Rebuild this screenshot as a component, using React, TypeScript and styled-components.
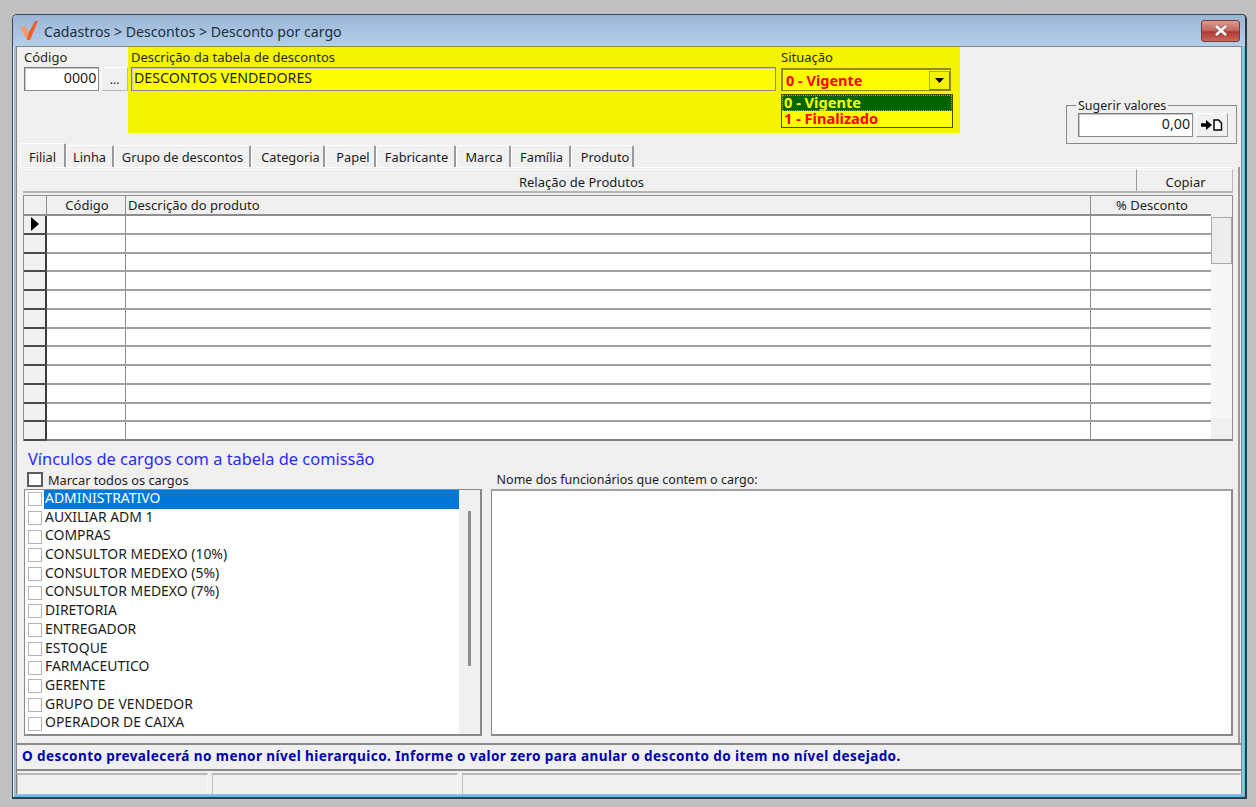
import React from "react";
import styled, { createGlobalStyle } from "styled-components";

const Global = createGlobalStyle`
  html, body { margin: 0; padding: 0; background: #c0c0c0; }
  body { width: 1256px; height: 807px; overflow: hidden; font-family: "Noto Sans", "Open Sans", sans-serif; font-size: 13px; color: #1c1c1c; }
  * { box-sizing: border-box; }
`;

const Page = styled.div`
  padding: 14px 9px 8px 12px;
  height: 807px;
`;
const Window = styled.div`
  width: 1235px;
  height: 785px;
  border: 1px solid #3c4650;
  border-bottom: 2px solid #2e4450;
  border-right: 2px solid #2e3a44;
  border-radius: 5px 5px 0 0;
  background: #9fc0dd;
  box-shadow: inset 1px 0 0 #e6f0f8, inset -1px 0 0 #5cc0ec, inset 0 -2px 0 #5cc0ec;
  padding: 0 3px 3px 3px;
  display: flex;
  flex-direction: column;
`;
const TitleBar = styled.div`
  height: 31px;
  margin: 0 -3px;
  padding: 0 5px 0 6px;
  display: flex;
  align-items: center;
  gap: 5px;
  border-radius: 4px 4px 0 0;
  background: linear-gradient(#9ab6d6, #b4cfe8);
  font-size: 14.15px;
  color: #20303e;
`;
const TitleText = styled.span`
  flex: 1;
  margin-top: 1px;
`;
const CloseBtn = styled.div`
  width: 39px;
  height: 22px;
  border: 1px solid #7a3b3b;
  border-radius: 3px;
  background: linear-gradient(#d99a92 0%, #c8695f 45%, #ad3a30 55%, #c8685c 100%);
  display: flex;
  align-items: center;
  justify-content: center;
`;
const Body = styled.div`
  flex: 1;
  min-height: 0;
  background: #f0f0f0;
  border: 1px solid #858585;
  border-bottom: 0;
  display: flex;
  flex-direction: column;
`;
const TopRow = styled.div`
  display: flex;
  height: 86px;
`;
const CodeBlock = styled.div`
  width: 111px;
  padding: 2px 0 0 7px;
`;
const FieldLabel = styled.div`
  height: 18px;
  line-height: 17px;
  font-size: 13px;
  color: #2a2a18;
`;
const InlineRow = styled.div`
  display: flex;
  gap: 2px;
`;
const Input = styled.div<{ $w: string; $bg?: string }>`
  width: ${(p) => p.$w};
  height: 24px;
  line-height: 20px;
  border: 1px solid #8a8a8a;
  border-top-color: #7c7c7c;
  border-left-color: #7c7c7c;
  box-shadow: inset 1px 1px 0 #c8c8c8;
  background: ${(p) => p.$bg || "#fff"};
  font-size: 14.2px;
  padding: 0 2px;
  white-space: nowrap;
`;
const NumberInput = styled(Input)`
  text-align: right;
`;
const DotsBtn = styled.div`
  width: 27px;
  height: 24px;
  background: #f0f0f0;
  border-right: 1px solid #b8b8b8;
  border-bottom: 1px solid #b8b8b8;
  border-left: 1px solid #fff;
  border-top: 1px solid #fff;
  text-align: center;
  line-height: 24px;
  font-size: 12px;
`;
const Yellow = styled.div`
  width: 832px;
  background: #f4f400;
  padding: 2px 0 0 3px;
  display: flex;
  border-top: 1px solid #8e8e20;
  margin-top: -1px;
`;
const DescBlock = styled.div`
  width: 650px;
`;
const SitBlock = styled.div`
  width: 178px;
`;
const Combo = styled.div`
  width: 170px;
  height: 23px;
  margin-top: 1px;
  display: flex;
  align-items: center;
  justify-content: space-between;
  background: #ffff00;
  border: 1px solid #8e8e20;
  border-top-width: 2px;
  border-left-width: 2px;
  padding-left: 3px;
  font-weight: 700;
  color: #ff0000;
  font-size: 14.5px;
`;
const ComboBtn = styled.div`
  width: 21px;
  height: 19px;
  background: #f4f400;
  border: 1px solid #a8a830;
  border-right-color: #77771a;
  border-bottom-color: #77771a;
  display: flex;
  align-items: center;
  justify-content: center;
`;
const DropList = styled.div`
  width: 172px;
  margin-top: 3px;
  border: 1px solid #4a4a00;
  background: #ffff00;
  font-weight: 700;
  font-size: 14.6px;
`;
const DropItem = styled.div<{ $on?: boolean }>`
  height: 16px;
  line-height: 15px;
  padding-left: 2px;
  color: ${(p) => (p.$on ? "#ffff00" : "#ff0000")};
  background: ${(p) => (p.$on ? "#006400" : "transparent")};
  outline: ${(p) => (p.$on ? "1px dotted #a8a800" : "none")};
  outline-offset: -1px;
`;
const SuggestWrap = styled.div`
  flex: 1;
  padding: 52px 0 0 106px;
`;
const Group = styled.fieldset`
  width: 171px;
  height: 45px;
  margin: 0;
  padding: 0 0 0 11px;
  border: 1px solid #8a8a8a;
  min-inline-size: 0;
`;
const Legend = styled.legend`
  padding: 0 2px;
  margin-left: -2px;
  font-size: 12.5px;
  line-height: 13px;
  height: 13px;
`;
const GroupRow = styled.div`
  display: flex;
  gap: 3px;
  margin-top: 1px;
`;
const IconBtn = styled.div`
  width: 32px;
  height: 24px;
  background: #f0f0f0;
  border: 1px solid #fff;
  border-right-color: #9a9a9a;
  border-bottom-color: #9a9a9a;
  display: flex;
  align-items: center;
  justify-content: center;
`;
const Tabs = styled.div`
  display: flex;
  height: 26px;
  margin-top: 8px;
  padding-left: 3px;
  align-items: flex-end;
`;
const Tab = styled.div<{ $w: number; $pad: number; $on?: boolean }>`
  width: ${(p) => p.$w}px;
  height: ${(p) => (p.$on ? 25 : 22)}px;
  padding-left: ${(p) => p.$pad}px;
  text-align: center;
  font-size: 12.8px;
  line-height: ${(p) => (p.$on ? 26 : 22)}px;
  background: #f0f0f0;
  border-top: 1px solid #fff;
  border-left: 1px solid #fff;
  border-right: 2px solid #9a9a9a;
  border-radius: 2px 2px 0 0;
  margin-bottom: ${(p) => (p.$on ? -1 : 0)}px;
  white-space: nowrap;
`;
const Content = styled.div`
  flex: none;
  height: 576px;
  margin-right: 1px;
  border-right: 2px solid #9a9a9a;
  display: flex;
  flex-direction: column;
`;
const TabPanel = styled.div`
  margin: 0 5px;
  border-top: 1px solid #fff;
  display: flex;
  flex-direction: column;
  height: 274px;
  padding: 1px 0 0 1px;
`;
const HeadBar = styled.div`
  height: 24px;
  display: flex;
  border-bottom: 2px solid #b4b4b4;
`;
const HeadTitle = styled.div`
  flex: 1;
  padding-left: 4px;
  text-align: center;
  line-height: 24px;
  font-size: 13px;
  border-top: 1px solid #fbfbfb;
`;
const HeadBtn = styled.div`
  width: 97px;
  padding-left: 2px;
  text-align: center;
  line-height: 24px;
  font-size: 13px;
  border-left: 1px solid #9a9a9a;
  border-right: 1px solid #b8b8b8;
  border-top: 1px solid #fbfbfb;
`;
const Grid = styled.div`
  flex: 1;
  margin: 2px 0 0 0;
  display: flex;
  min-height: 0;
  width: 1210px;
  border: 1px solid #8e8e8e;
  border-bottom: 2px solid #808080;
`;
const GridTable = styled.div`
  flex: 1;
  display: flex;
  flex-direction: column;
  background: #fff;
`;
const GridRow = styled.div<{ $head?: boolean }>`
  display: grid;
  grid-template-columns: 23px 79px 965px 120px;
  flex: ${(p) => (p.$head ? "0 0 19px" : "1 1 0")};
  border-bottom: ${(p) => (p.$head ? "2px solid #8e8e8e" : "2px solid #a0a0a0")};
  &:last-child { border-bottom: 0; }
`;
const Cell = styled.div<{ $head?: boolean; $center?: boolean }>`
  border-right: 1px solid #8e8e8e;
  background: ${(p) => (p.$head ? "#f0f0f0" : "#fff")};
  font-size: 13px;
  line-height: 18px;
  padding-left: 2px;
  text-align: ${(p) => (p.$center ? "center" : "left")};
  &:last-child { border-right: 0; }
`;
const IndicatorCell = styled.div`
  background: #f0f0f0;
  border-right: 2px solid #3c3c3c;
  box-shadow: 0 2px 0 #4a4a4a;
  display: flex;
  align-items: center;
  justify-content: center;
`;
const GridScroll = styled.div`
  width: 22px;
  background: #f0f0f0;
  padding-top: 21px;
`;
const GridThumb = styled.div`
  height: 47px;
  width: 21px;
  border: 1px solid #a8a8a8;
  background: #ededed;
`;
const GridTrack = styled.div`
  height: 154px;
  background: #f7f7f7;
`;
const SectionTitle = styled.div`
  margin: 8px 0 0 11px;
  height: 21px;
  line-height: 20px;
  font-size: 16.4px;
  color: #2a2aff;
`;
const MarkRow = styled.div`
  display: flex;
  align-items: center;
  height: 19px;
  padding-left: 10px;
  gap: 5px;
  font-size: 12.8px;
`;
const MarkBox = styled.span`
  width: 16px;
  height: 15px;
  border: 2px solid #5c5c5c;
  background: #fff;
  flex: none;
`;
const EmployeesLabel = styled.span`
  margin-left: 303px;
  font-size: 12.5px;
`;
const Lists = styled.div`
  display: flex;
  gap: 9px;
  margin: 0 0 0 7px;
  height: 247px;
`;
const JobList = styled.div`
  width: 458px;
  border: 1px solid #8a8a8a;
  border-right: 2px solid #8a8a8a;
  border-bottom: 2px solid #8a8a8a;
  background: #fff;
  display: flex;
`;
const JobItems = styled.div`
  flex: 1;
`;
const JobItem = styled.div`
  height: 18.7px;
  display: flex;
  align-items: center;
  padding-left: 3px;
  gap: 2px;
  font-size: 13.95px;
`;
const JobCheck = styled.span`
  width: 14px;
  height: 14px;
  flex: none;
  border: 1px solid #b4b4b4;
  background: #fff;
`;
const JobText = styled.span<{ $on?: boolean }>`
  flex: 1;
  height: 18.7px;
  line-height: 16px;
  padding-left: 1px;
  background: ${(p) => (p.$on ? "#0078d7" : "transparent")};
  color: ${(p) => (p.$on ? "#fff" : "#1c1c1c")};
`;
const JobScroll = styled.div`
  width: 21px;
  background: #f0f0f0;
  padding: 21px 0 0 9px;
`;
const JobThumb = styled.div`
  width: 3px;
  height: 155px;
  background: #8c8c8c;
`;
const Names = styled.div`
  width: 742px;
  border: 1px solid #8a8a8a;
  border-top: 2px solid #a0a0a0;
  border-right: 2px solid #8a8a8a;
  border-bottom: 2px solid #8a8a8a;
  background: #fff;
`;
const Notice = styled.div`
  height: 28px;
  padding-left: 5px;
  border-top: 2px solid #8a8a8a;
  border-bottom: 2px solid #8a8a8a;
  line-height: 22px;
  font-size: 13.5px;
  letter-spacing: 0.43px;
  font-weight: 700;
  color: #0000b4;
`;
const Status = styled.div`
  flex: 1;
  display: flex;
  gap: 4px;
  margin-top: 2px;
`;
const StatusCell = styled.div<{ $w?: number }>`
  ${(p) => (p.$w ? `width:${p.$w}px;` : "flex:1;")}
  border-top: 2px solid #b8b8b8;
  border-left: 1px solid #c0c0c0;
  border-right: 1px solid #fbfbfb;
`;

const jobs = [
  "ADMINISTRATIVO", "AUXILIAR ADM 1", "COMPRAS", "CONSULTOR MEDEXO (10%)", "CONSULTOR MEDEXO (5%)",
  "CONSULTOR MEDEXO (7%)", "DIRETORIA", "ENTREGADOR", "ESTOQUE", "FARMACEUTICO", "GERENTE",
  "GRUPO DE VENDEDOR", "OPERADOR DE CAIXA",
];
const tabs: [string, number, number][] = [
  ["Filial", 46, 0], ["Linha", 48, 0], ["Grupo de descontos", 137, 1], ["Categoria", 74, 6], ["Papel", 51, 6],
  ["Fabricante", 80, 2], ["Marca", 55, 2], ["Família", 60, 2], ["Produto", 63, 6],
];
const rows = Array.from({ length: 12 }, (_, i) => i);

export default function App() {
  return (
    <>
      <Global />
      <Page>
        <Window>
          <TitleBar>
            <svg width="20" height="21" viewBox="0 0 20 21">
              <path d="M1 7 L6 6 L11 14 L9 20 L8 20 Z" fill="#f29a72" />
              <path d="M8 20 L10 12 L16 1 L19 1 L11 20 Z" fill="#ee5f25" />
            </svg>
            <TitleText>Cadastros &gt; Descontos &gt; Desconto por cargo</TitleText>
            <CloseBtn>
              <svg width="14" height="11" viewBox="0 0 14 11">
                <path d="M2 1 L12 10 M12 1 L2 10" stroke="#6e3a36" strokeWidth="4" opacity="0.45" />
                <path d="M2 1 L12 10 M12 1 L2 10" stroke="#fff" strokeWidth="2.6" />
              </svg>
            </CloseBtn>
          </TitleBar>
          <Body>
            <TopRow>
              <CodeBlock>
                <FieldLabel>Código</FieldLabel>
                <InlineRow>
                  <NumberInput $w="76px">0000</NumberInput>
                  <DotsBtn>...</DotsBtn>
                </InlineRow>
              </CodeBlock>
              <Yellow>
                <DescBlock>
                  <FieldLabel>Descrição da tabela de descontos</FieldLabel>
                  <Input $w="645px" $bg="#ffff00">DESCONTOS VENDEDORES</Input>
                </DescBlock>
                <SitBlock>
                  <FieldLabel>Situação</FieldLabel>
                  <Combo>
                    0 - Vigente
                    <ComboBtn>
                      <svg width="9" height="5" viewBox="0 0 9 5"><path d="M0 0 H9 L4.5 5 Z" fill="#000" /></svg>
                    </ComboBtn>
                  </Combo>
                  <DropList>
                    <DropItem $on>0 - Vigente</DropItem>
                    <DropItem>1 - Finalizado</DropItem>
                  </DropList>
                </SitBlock>
              </Yellow>
              <SuggestWrap>
                <Group>
                  <Legend>Sugerir valores</Legend>
                  <GroupRow>
                    <NumberInput $w="115px">0,00</NumberInput>
                    <IconBtn>
                      <svg width="22" height="12" viewBox="0 0 22 12">
                        <path d="M0 4.2 H5 V1 L11 6 L5 11 V7.8 H0 Z" fill="#000" />
                        <path d="M13 1 H17.5 L20.5 4 V11 H13 Z" fill="#fff" stroke="#000" strokeWidth="1.5" />
                      </svg>
                    </IconBtn>
                  </GroupRow>
                </Group>
              </SuggestWrap>
            </TopRow>
            <Tabs>
              {tabs.map(([t, w, pad], i) => (
                <Tab key={t} $w={w} $pad={pad} $on={i === 0}>{t}</Tab>
              ))}
            </Tabs>
            <Content>
              <TabPanel>
                <HeadBar>
                  <HeadTitle>Relação de Produtos</HeadTitle>
                  <HeadBtn>Copiar</HeadBtn>
                </HeadBar>
                <Grid>
                  <GridTable>
                    <GridRow $head>
                      <Cell $head />
                      <Cell $head $center>Código</Cell>
                      <Cell $head>Descrição do produto</Cell>
                      <Cell $head $center>% Desconto</Cell>
                    </GridRow>
                    {rows.map((i) => (
                      <GridRow key={i}>
                        <IndicatorCell>
                          {i === 0 && (
                            <svg width="8" height="14" viewBox="0 0 8 14"><path d="M0 0 L8 7 L0 14 Z" fill="#000" /></svg>
                          )}
                        </IndicatorCell>
                        <Cell />
                        <Cell />
                        <Cell />
                      </GridRow>
                    ))}
                  </GridTable>
                  <GridScroll>
                    <GridThumb />
                    <GridTrack />
                  </GridScroll>
                </Grid>
              </TabPanel>
              <SectionTitle>Vínculos de cargos com a tabela de comissão</SectionTitle>
              <MarkRow>
                <MarkBox />
                Marcar todos os cargos
                <EmployeesLabel>Nome dos funcionários que contem o cargo:</EmployeesLabel>
              </MarkRow>
              <Lists>
                <JobList>
                  <JobItems>
                    {jobs.map((j, i) => (
                      <JobItem key={j}>
                        <JobCheck />
                        <JobText $on={i === 0}>{j}</JobText>
                      </JobItem>
                    ))}
                  </JobItems>
                  <JobScroll>
                    <JobThumb />
                  </JobScroll>
                </JobList>
                <Names />
              </Lists>
            </Content>
            <Notice>O desconto prevalecerá no menor nível hierarquico. Informe o valor zero para anular o desconto do item no nível desejado.</Notice>
            <Status>
              <StatusCell $w={191} />
              <StatusCell $w={246} />
              <StatusCell />
            </Status>
          </Body>
        </Window>
      </Page>
    </>
  );
}
